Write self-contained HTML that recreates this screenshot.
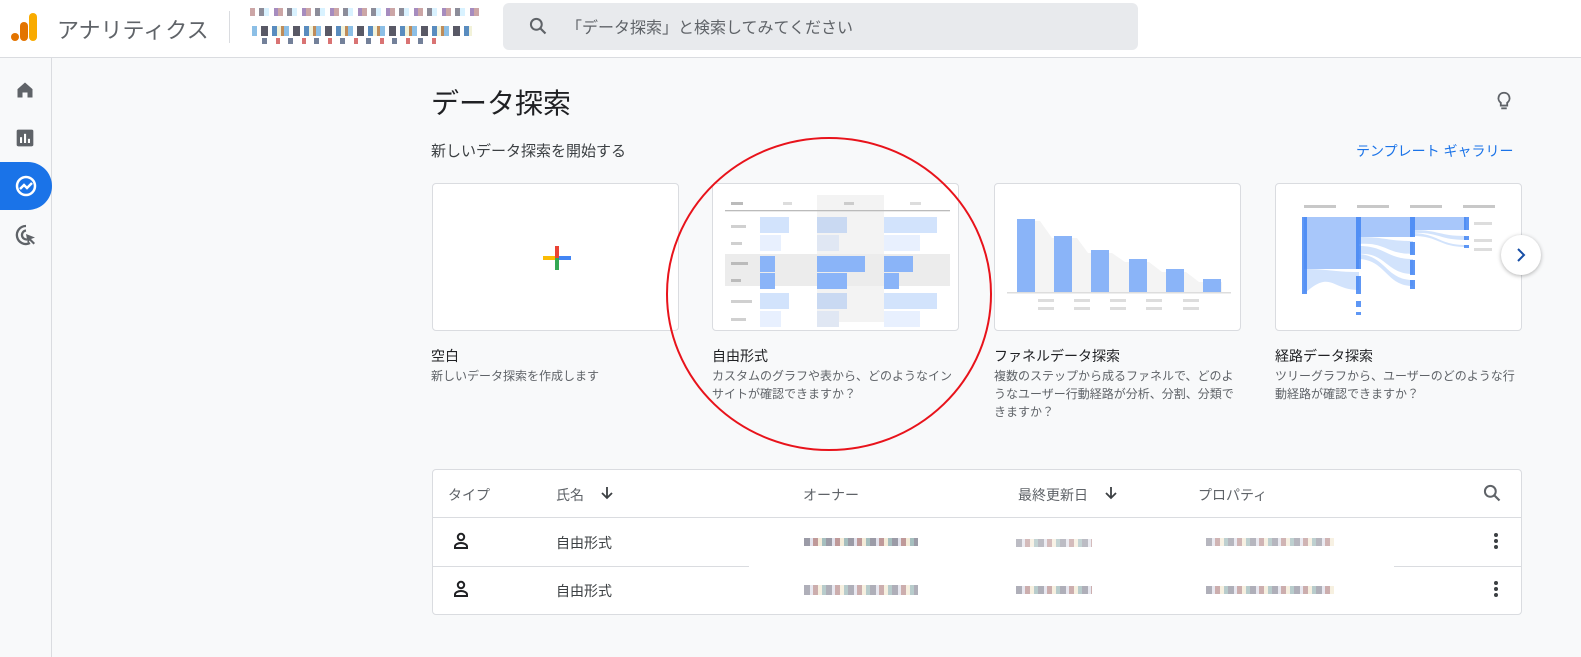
<!DOCTYPE html>
<html><head><meta charset="utf-8">
<style>
*{box-sizing:border-box;margin:0;padding:0}
body{width:1581px;height:657px;overflow:hidden;background:#f8f9fa;font-family:"Liberation Sans","Noto Sans CJK JP",sans-serif;color:#202124;position:relative}
.hdr{position:absolute;left:0;top:0;width:1581px;height:58px;background:#fff;border-bottom:1px solid #dadce0}
.side{position:absolute;left:0;top:58px;width:52px;height:599px;background:#f8f9fa;border-right:1px solid #dadce0}
.abs{position:absolute}
.card{position:absolute;top:183px;width:247px;height:148px;background:#fff;border:1px solid #dadce0;border-radius:4px;overflow:hidden}
.ct{position:absolute;font-size:14px;color:#202124}
.cd{position:absolute;font-size:12px;color:#5f6368;line-height:18px;width:250px}
.th{position:absolute;font-size:14px;color:#5f6368;top:485px}
.td{position:absolute;font-size:14px;color:#3c4043}
.px{position:absolute;height:8px;background:repeating-linear-gradient(90deg,#7a7a8a 0 6px,#d9d9e6 6px 9px,#a77 9px 14px,#f1e6cc 14px 18px,#8aa 18px 22px);opacity:.75}
</style></head><body>
<div class="hdr">
  <svg class="abs" style="left:11px;top:12px" width="28" height="30" viewBox="0 0 28 30">
    <rect x="18" y="1" width="8" height="28" rx="4" fill="#f9ab00"/>
    <rect x="9" y="10" width="8" height="19" rx="4" fill="#e37400"/>
    <circle cx="4" cy="25" r="4" fill="#e37400"/>
  </svg>
  <div class="abs" style="left:57px;top:13px;font-size:22px;color:#5f6368">アナリティクス</div>
  <div class="abs" style="left:229px;top:11px;width:1px;height:32px;background:#dadce0"></div>
  <div class="px" style="left:250px;top:8px;width:230px;background:repeating-linear-gradient(90deg,#b88 0 5px,#fff 5px 9px,#667 9px 14px,#cef 14px 19px,#fff 19px 24px,#86a 24px 28px)"></div>
  <div class="px" style="left:252px;top:26px;width:220px;height:10px;background:repeating-linear-gradient(90deg,#6ad 0 5px,#fff 5px 9px,#223 9px 16px,#fff 16px 20px,#26a 20px 25px,#eec 25px 29px,#a62 29px 32px)"></div>
  <div class="px" style="left:262px;top:38px;width:180px;height:6px;background:repeating-linear-gradient(90deg,#457 0 5px,#fff 5px 14px,#c44 14px 18px,#fff 18px 26px)"></div>
  <div class="abs" style="left:503px;top:3px;width:635px;height:47px;background:#e8eaed;border-radius:6px"></div>
  <svg class="abs" style="left:528px;top:16px" width="20" height="20" viewBox="0 0 24 24"><circle cx="10" cy="10" r="6.5" fill="none" stroke="#5f6368" stroke-width="2.4"/><path d="M15 15l6 6" stroke="#5f6368" stroke-width="2.6"/></svg>
  <div class="abs" style="left:566px;top:14px;font-size:16px;color:#5f6368">「データ探索」と検索してみてください</div>
</div>
<div class="side">
  <svg class="abs" style="left:15px;top:22px" width="20" height="20" viewBox="0 0 24 24"><path d="M3 11L12 3l9 8v10h-6v-6H9v6H3z" fill="#5f6368"/></svg>
  <svg class="abs" style="left:15px;top:70px" width="20" height="20" viewBox="0 0 24 24"><rect x="2" y="2" width="20" height="20" rx="2" fill="#5f6368"/><rect x="6" y="11" width="2.5" height="7" fill="#fff"/><rect x="10.8" y="7" width="2.5" height="11" fill="#fff"/><rect x="15.5" y="13" width="2.5" height="5" fill="#fff"/></svg>
  <div class="abs" style="left:0;top:104px;width:52px;height:48px;background:#1a73e8;border-radius:0 24px 24px 0"></div>
  <svg class="abs" style="left:14px;top:116px" width="24" height="24" viewBox="0 0 24 24"><circle cx="12" cy="12" r="9" fill="none" stroke="#fff" stroke-width="2.5"/><path d="M6 15l4-4 3 3 5-5" fill="none" stroke="#fff" stroke-width="2.5"/></svg>
  <svg class="abs" style="left:14px;top:165px" width="24" height="24" viewBox="0 0 24 24"><path d="M12 3a9 9 0 1 0 4 17" fill="none" stroke="#5f6368" stroke-width="2.3"/><path d="M12 7.5a4.5 4.5 0 1 0 1 9" fill="none" stroke="#5f6368" stroke-width="2.3"/><path d="M12 11l9 3.5-4 1.5 4 4-1.5 1.5-4-4-1.5 4z" fill="#5f6368"/></svg>
</div>

<div class="abs" style="left:431px;top:82px;font-size:28px;color:#202124">データ探索</div>
<svg class="abs" style="left:1493px;top:89px" width="22" height="24" viewBox="0 0 24 24"><path d="M12 3a6 6 0 0 0-3.5 10.9V17h7v-3.1A6 6 0 0 0 12 3z" fill="none" stroke="#5f6368" stroke-width="2"/><path d="M9 20h6" stroke="#5f6368" stroke-width="2"/></svg>
<div class="abs" style="left:431px;top:140px;font-size:15px;color:#3c4043">新しいデータ探索を開始する</div>
<div class="abs" style="left:1356px;top:141px;font-size:14px;color:#1a73e8">テンプレート ギャラリー</div>

<div class="card" style="left:432px">
  <svg class="abs" style="left:107px;top:57px" width="34" height="34" viewBox="0 0 34 34">
    <rect x="15" y="5" width="4" height="12" fill="#ea4335"/><rect x="19" y="15" width="12" height="4" fill="#4285f4"/>
    <rect x="15" y="17" width="4" height="12" fill="#34a853"/><rect x="3" y="15" width="12" height="4" fill="#fbbc04"/>
  </svg>
</div>
<div class="card" style="left:712px">
<svg width="247" height="148" viewBox="0 0 247 148">
  <rect x="104" y="11" width="67" height="127" fill="#f3f3f3"/>
  <rect x="12" y="70" width="225" height="32" fill="#ececec"/>
  <rect x="18" y="18" width="12" height="3" fill="#bbb"/><rect x="70" y="18" width="9" height="3" fill="#ddd"/><rect x="131" y="18" width="10" height="3" fill="#ccc"/><rect x="197" y="18" width="11" height="3" fill="#ddd"/>
  <rect x="12" y="26" width="225" height="1.3" fill="#bbb"/>
  <g fill="#d2e3fc"><rect x="47" y="33" width="29" height="16"/><rect x="171" y="33" width="53" height="16"/><rect x="47" y="109" width="29" height="16"/><rect x="171" y="109" width="53" height="16"/></g>
  <g fill="#e8f0fe"><rect x="47" y="51" width="21" height="16"/><rect x="171" y="51" width="36" height="16"/><rect x="47" y="127" width="21" height="16"/><rect x="171" y="127" width="36" height="16"/></g>
  <g fill="#c9d9f2"><rect x="104" y="33" width="30" height="16"/><rect x="104" y="109" width="30" height="16"/></g>
  <g fill="#e0e7f3"><rect x="104" y="51" width="22" height="16"/><rect x="104" y="127" width="22" height="16"/></g>
  <g fill="#8ab4f8"><rect x="47" y="72" width="15" height="16"/><rect x="47" y="89" width="15" height="16"/><rect x="104" y="72" width="48" height="16"/><rect x="104" y="89" width="30" height="16"/><rect x="171" y="72" width="29" height="16"/><rect x="171" y="89" width="15" height="16"/></g>
  <g fill="#d0d0d0"><rect x="18" y="41" width="15" height="3"/><rect x="18" y="58" width="11" height="3"/><rect x="18" y="78" width="17" height="3" fill="#bbb"/><rect x="18" y="95" width="10" height="3" fill="#bbb"/><rect x="18" y="116" width="21" height="3"/><rect x="18" y="134" width="15" height="3"/></g>
</svg></div>
<div class="card" style="left:994px">
<svg width="247" height="148" viewBox="0 0 247 148">
  <path d="M22 37H45L57 54H82L93 69H117L130 78H154L167 88H191L204 98H227V108H22Z" fill="#f4f4f4"/>
  <g fill="#8ab4f8"><rect x="22" y="35" width="18" height="73"/><rect x="59" y="52" width="18" height="56"/><rect x="96" y="66" width="18" height="42"/><rect x="134" y="75" width="18" height="33"/><rect x="171" y="85" width="18" height="23"/><rect x="208" y="95" width="18" height="13"/></g>
  <rect x="12" y="108" width="224" height="1.5" fill="#ddd"/>
  <g fill="#ddd"><rect x="43" y="115" width="16" height="3"/><rect x="79" y="115" width="16" height="3"/><rect x="115" y="115" width="16" height="3"/><rect x="151" y="115" width="16" height="3"/><rect x="188" y="115" width="16" height="3"/>
  <rect x="43" y="123" width="16" height="3"/><rect x="79" y="123" width="16" height="3"/><rect x="115" y="123" width="16" height="3"/><rect x="151" y="123" width="16" height="3"/><rect x="188" y="123" width="16" height="3"/></g>
</svg></div>
<div class="card" style="left:1275px">
<svg width="247" height="148" viewBox="0 0 247 148">
  <g fill="#c8c8c8"><rect x="28" y="21" width="32" height="3"/><rect x="81" y="21" width="32" height="3"/><rect x="134" y="21" width="32" height="3"/><rect x="187" y="21" width="32" height="3"/></g>
  <rect x="28" y="33" width="55" height="52" fill="#a8c7fa"/>
  <path d="M28 85C55 85 55 88 83 88V106C55 106 55 85 28 110Z" fill="#d2e3fc"/>
  <path d="M83 33H137V53H83Z" fill="#a8c7fa"/>
  <path d="M83 53C110 53 110 57 137 57V70C110 70 110 58 83 60Z M83 62C110 62 110 75 137 75V90C110 90 110 68 83 70Z M83 70C110 72 110 96 137 96V102C110 102 110 76 83 75Z" fill="#d2e3fc"/>
  <path d="M137 33H190V46H137Z" fill="#a8c7fa"/>
  <path d="M137 46C163 46 163 52 190 52V56C163 56 163 48 137 49Z M137 49C163 50 163 61 190 61V63C163 63 163 52 137 52Z" fill="#d2e3fc"/>
  <g fill="#4285f4" opacity=".85"><rect x="26" y="33" width="5" height="77"/><rect x="80" y="33" width="5" height="52"/><rect x="80" y="92" width="5" height="18"/><rect x="80" y="117" width="5" height="6"/><rect x="80" y="128" width="5" height="3"/>
  <rect x="134" y="33" width="5" height="20"/><rect x="134" y="58" width="5" height="13"/><rect x="134" y="76" width="5" height="15"/><rect x="134" y="96" width="5" height="9"/>
  <rect x="188" y="33" width="5" height="13"/><rect x="188" y="52" width="5" height="4"/><rect x="188" y="61" width="5" height="3"/></g>
  <g fill="#ddd"><rect x="198" y="38" width="18" height="3"/><rect x="198" y="55" width="18" height="3"/><rect x="198" y="64" width="18" height="3"/></g>
</svg></div>
<div class="abs" style="left:1501px;top:235px;width:40px;height:40px;border-radius:50%;background:#fff;box-shadow:0 1px 4px rgba(0,0,0,.3)"></div>
<svg class="abs" style="left:1511px;top:245px" width="20" height="20" viewBox="0 0 20 20"><path d="M7 4l6 6-6 6" fill="none" stroke="#174ea6" stroke-width="2"/></svg>

<div class="ct" style="left:431px;top:346px">空白</div>
<div class="cd" style="left:431px;top:367px">新しいデータ探索を作成します</div>
<div class="ct" style="left:712px;top:346px">自由形式</div>
<div class="cd" style="left:712px;top:367px">カスタムのグラフや表から、どのようなインサイトが確認できますか？</div>
<div class="ct" style="left:994px;top:346px">ファネルデータ探索</div>
<div class="cd" style="left:994px;top:367px">複数のステップから成るファネルで、どのようなユーザー行動経路が分析、分割、分類できますか？</div>
<div class="ct" style="left:1275px;top:346px">経路データ探索</div>
<div class="cd" style="left:1275px;top:367px">ツリーグラフから、ユーザーのどのような行動経路が確認できますか？</div>

<svg class="abs" style="left:0;top:0;pointer-events:none" width="1581" height="657"><ellipse cx="829" cy="294" rx="162" ry="156" fill="none" stroke="#e8131b" stroke-width="2"/></svg>

<div class="abs" style="left:432px;top:469px;width:1090px;height:146px;background:#fff;border:1px solid #dadce0;border-radius:4px"></div>
<div class="abs" style="left:433px;top:517px;width:1088px;height:1px;background:#dadce0"></div>
<div class="abs" style="left:433px;top:566px;width:316px;height:1px;background:#dadce0"></div>
<div class="abs" style="left:1394px;top:566px;width:127px;height:1px;background:#dadce0"></div>
<div class="th" style="left:448px">タイプ</div>
<div class="th" style="left:556px">氏名</div>
<svg class="abs" style="left:600px;top:486px" width="14" height="14" viewBox="0 0 14 14"><path d="M7 1v11M2 7l5 5 5-5" fill="none" stroke="#3c4043" stroke-width="1.8"/></svg>
<div class="th" style="left:803px">オーナー</div>
<div class="th" style="left:1018px">最終更新日</div>
<svg class="abs" style="left:1104px;top:486px" width="14" height="14" viewBox="0 0 14 14"><path d="M7 1v11M2 7l5 5 5-5" fill="none" stroke="#3c4043" stroke-width="1.8"/></svg>
<div class="th" style="left:1198px">プロパティ</div>
<svg class="abs" style="left:1482px;top:483px" width="20" height="20" viewBox="0 0 24 24"><circle cx="10" cy="10" r="6.5" fill="none" stroke="#5f6368" stroke-width="2.4"/><path d="M15 15l6 6" stroke="#5f6368" stroke-width="2.6"/></svg>

<svg class="abs" style="left:453px;top:532px" width="16" height="18" viewBox="0 0 16 18"><circle cx="8" cy="5" r="3.2" fill="none" stroke="#202124" stroke-width="2"/><path d="M2 16v-1.5c0-2 3-3.5 6-3.5s6 1.5 6 3.5V16z" fill="none" stroke="#202124" stroke-width="2"/></svg>
<svg class="abs" style="left:453px;top:580px" width="16" height="18" viewBox="0 0 16 18"><circle cx="8" cy="5" r="3.2" fill="none" stroke="#202124" stroke-width="2"/><path d="M2 16v-1.5c0-2 3-3.5 6-3.5s6 1.5 6 3.5V16z" fill="none" stroke="#202124" stroke-width="2"/></svg>
<div class="td" style="left:556px;top:533px">自由形式</div>
<div class="td" style="left:556px;top:581px">自由形式</div>
<div class="px" style="left:804px;top:538px;width:114px"></div>
<div class="px" style="left:804px;top:585px;width:114px;height:10px;opacity:.6"></div>
<div class="px" style="left:1016px;top:539px;width:76px;opacity:.5"></div>
<div class="px" style="left:1016px;top:586px;width:76px;opacity:.6"></div>
<div class="px" style="left:1206px;top:538px;width:128px;opacity:.55"></div>
<div class="px" style="left:1206px;top:586px;width:128px;opacity:.6"></div>
<svg class="abs" style="left:1492px;top:532px" width="8" height="18" viewBox="0 0 8 18"><circle cx="4" cy="3" r="2" fill="#3c4043"/><circle cx="4" cy="9" r="2" fill="#3c4043"/><circle cx="4" cy="15" r="2" fill="#3c4043"/></svg>
<svg class="abs" style="left:1492px;top:580px" width="8" height="18" viewBox="0 0 8 18"><circle cx="4" cy="3" r="2" fill="#3c4043"/><circle cx="4" cy="9" r="2" fill="#3c4043"/><circle cx="4" cy="15" r="2" fill="#3c4043"/></svg>
</body></html>
